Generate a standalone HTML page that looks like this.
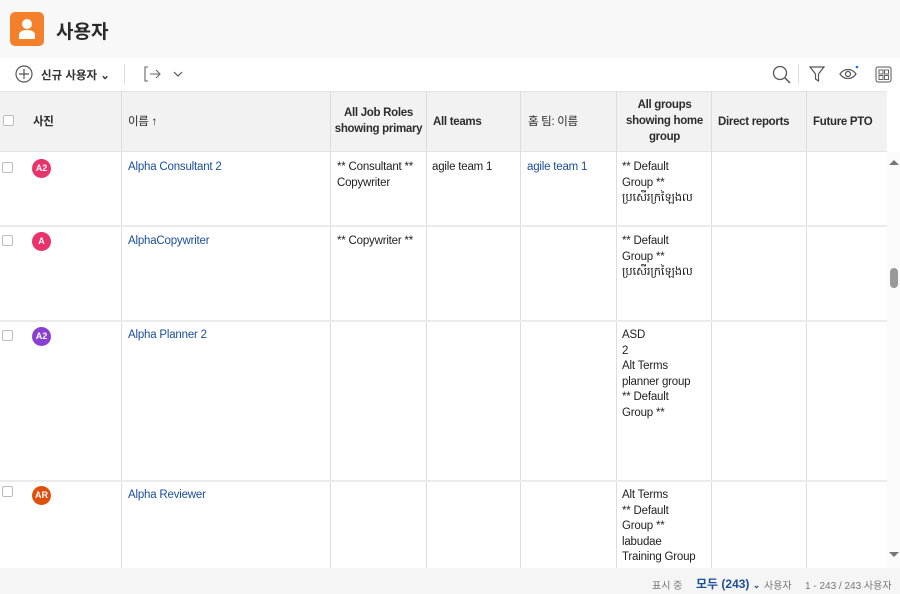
<!DOCTYPE html>
<html><head><meta charset="utf-8"><style>
*{margin:0;padding:0;box-sizing:border-box}
body{width:900px;height:594px;overflow:hidden;background:#fff;font-family:"Liberation Sans","Noto Sans CJK KR",sans-serif;color:#222;font-size:12px;position:relative}
.a{position:absolute}
.top{left:0;top:0;width:900px;height:58px;background:#f8f8f8}
.logo{left:10px;top:12px;width:34px;height:34px;background:#f5802b;border-radius:5px}
.tb{left:0;top:58px;width:900px;height:33px;background:#fff}
.hdr{left:0;top:91px;width:887px;height:61px;background:#f2f2f2;border-top:1px solid #e4e4e4;border-bottom:1px solid #e4e4e4}
.vl{width:1px;background:#ddd;top:91px;height:477px}
.hl{left:0;width:887px;height:2px;background:#ebebeb}
.h{font-weight:bold;font-size:11.5px;color:#2c2c2c;text-align:center;line-height:16px;letter-spacing:-0.3px}
.t{font-size:11.5px;line-height:15.5px;color:#222;letter-spacing:-0.2px}
.lk{color:#1b4e9a;font-size:11.5px;letter-spacing:-0.2px}
.cb{width:11px;height:11px;border:1px solid #bbb;border-radius:2px;background:#fff}
.av{width:19px;height:19px;border-radius:50%;color:#fff;font-size:9px;font-weight:bold;text-align:center;line-height:19px}
.foot{left:0;top:568px;width:900px;height:26px;background:#f5f5f5}
.sb{left:887px;top:152px;width:13px;height:416px;background:#fafafa}
</style></head><body>
<div class="a top"></div>
<div class="a logo"><svg width="34" height="34"><circle cx="17" cy="12" r="5" fill="#fff"/><path d="M9 27v-4c0-3 3-5 8-5s8 2 8 5v4z" fill="#fff"/></svg></div>
<div class="a" style="left:56px;top:17px;font-size:19px;font-weight:bold;color:#2a2a2a">사용자</div>
<div class="a tb"></div>
<svg class="a" style="left:15px;top:65px" width="18" height="18"><circle cx="9" cy="9" r="8" fill="none" stroke="#555" stroke-width="1.2"/><path d="M9 4v10M4 9h10" stroke="#555" stroke-width="1.2"/></svg>
<div class="a" style="left:41px;top:67px;font-size:11.5px;font-weight:bold;color:#333">신규 사용자 ⌄</div>
<div class="a" style="left:124px;top:64px;width:1px;height:20px;background:#ddd"></div>
<svg class="a" style="left:143px;top:65px" width="20" height="18"><path d="M5 2H2v14h3M7 9h10M13 5l4 4-4 4" fill="none" stroke="#666" stroke-width="1.1"/></svg>
<svg class="a" style="left:173px;top:70px" width="10" height="8"><path d="M1 2l4 4 4-4" fill="none" stroke="#555" stroke-width="1.2"/></svg>
<svg class="a" style="left:772px;top:65px" width="20" height="20"><circle cx="8" cy="8" r="6.5" fill="none" stroke="#555" stroke-width="1.3"/><path d="M13 13l5 5" stroke="#555" stroke-width="1.5"/></svg>
<div class="a" style="left:798px;top:64px;width:1px;height:20px;background:#ddd"></div>
<svg class="a" style="left:808px;top:65px" width="18" height="18"><path d="M2 2h14l-5.5 7v7l-3-2V9z" fill="none" stroke="#555" stroke-width="1.2"/></svg>
<svg class="a" style="left:838px;top:64px" width="22" height="18"><path d="M2 10c4-6 12-6 16 0c-4 6-12 6-16 0z" fill="none" stroke="#555" stroke-width="1.2"/><circle cx="10" cy="10" r="2.5" fill="none" stroke="#555" stroke-width="1.2"/><circle cx="19" cy="3" r="1.3" fill="#1473e6"/></svg>
<svg class="a" style="left:875px;top:66px" width="18" height="18"><rect x="1" y="1" width="15" height="15" rx="2" fill="none" stroke="#555"/><rect x="4" y="4" width="4" height="4" fill="none" stroke="#555" stroke-width=".9"/><rect x="9.5" y="4" width="4" height="4" fill="none" stroke="#555" stroke-width=".9"/><rect x="4" y="9.5" width="4" height="4" fill="none" stroke="#555" stroke-width=".9"/><rect x="9.5" y="9.5" width="4" height="4" fill="none" stroke="#555" stroke-width=".9"/></svg>

<div class="a hdr"></div>
<div class="a vl" style="left:121px"></div><div class="a vl" style="left:330px"></div><div class="a vl" style="left:426px"></div><div class="a vl" style="left:520px"></div><div class="a vl" style="left:616px"></div><div class="a vl" style="left:711px"></div><div class="a vl" style="left:806px"></div>
<div class="a hl" style="top:225px"></div><div class="a hl" style="top:320px"></div><div class="a hl" style="top:480px"></div>

<div class="a cb" style="left:3px;top:115px"></div>
<div class="a h" style="left:33px;top:114px">사진</div>
<div class="a h" style="left:128px;top:114px;font-weight:normal">이름 ↑</div>
<div class="a h" style="left:331px;top:105px;width:95px">All Job Roles showing primary</div>
<div class="a h" style="left:433px;top:114px">All teams</div>
<div class="a h" style="left:528px;top:114px;font-weight:normal">홈 팀: 이름</div>
<div class="a h" style="left:617px;top:97px;width:95px">All groups showing home group</div>
<div class="a h" style="left:718px;top:114px">Direct reports</div>
<div class="a h" style="left:813px;top:114px">Future PTO</div>

<div class="a cb" style="left:2px;top:162px"></div>
<div class="a av" style="left:32px;top:159px;background:#e8336b">A2</div>
<div class="a lk" style="left:128px;top:161px">Alpha Consultant 2</div>
<div class="a t" style="left:337px;top:160px">** Consultant **<br>Copywriter</div>
<div class="a t" style="left:432px;top:160px">agile team 1</div>
<div class="a lk" style="left:527px;top:161px">agile team 1</div>
<div class="a t" style="left:622px;top:160px">** Default<br>Group **<br>ប្រសើរក្រឡៃងល</div>

<div class="a cb" style="left:2px;top:235px"></div>
<div class="a av" style="left:32px;top:232px;background:#e8336b">A</div>
<div class="a lk" style="left:128px;top:235px">AlphaCopywriter</div>
<div class="a t" style="left:337px;top:234px">** Copywriter **</div>
<div class="a t" style="left:622px;top:234px">** Default<br>Group **<br>ប្រសើរក្រឡៃងល</div>

<div class="a cb" style="left:2px;top:330px"></div>
<div class="a av" style="left:32px;top:327px;background:#8a3fd4">A2</div>
<div class="a lk" style="left:128px;top:329px">Alpha Planner 2</div>
<div class="a t" style="left:622px;top:328px">ASD<br>2<br>Alt Terms<br>planner group<br>** Default<br>Group **</div>

<div class="a cb" style="left:2px;top:486px"></div>
<div class="a av" style="left:32px;top:486px;background:#e04f0b">AR</div>
<div class="a lk" style="left:128px;top:489px">Alpha Reviewer</div>
<div class="a t" style="left:622px;top:488px">Alt Terms<br>** Default<br>Group **<br>labudae<br>Training Group</div>

<div class="a sb"></div>
<svg class="a" style="left:889px;top:158px" width="10" height="8"><path d="M0 7l5-5 5 5z" fill="#777"/></svg>
<div class="a" style="left:890px;top:268px;width:8px;height:20px;background:#999;border-radius:4px"></div>
<svg class="a" style="left:889px;top:551px" width="10" height="8"><path d="M0 1l5 5 5-5z" fill="#777"/></svg>

<div class="a foot"></div>
<div class="a" style="left:652px;top:577px;font-size:10px;color:#777">표시 중</div>
<div class="a" style="left:696px;top:575px;font-size:12px;font-weight:bold;color:#1b4e9a">모두 (243) <span style="font-size:9px">⌄</span></div>
<div class="a" style="left:764px;top:577px;font-size:10px;color:#777">사용자</div>
<div class="a" style="left:805px;top:577px;font-size:10px;color:#777">1 - 243 / 243 사용자</div>
</body></html>
